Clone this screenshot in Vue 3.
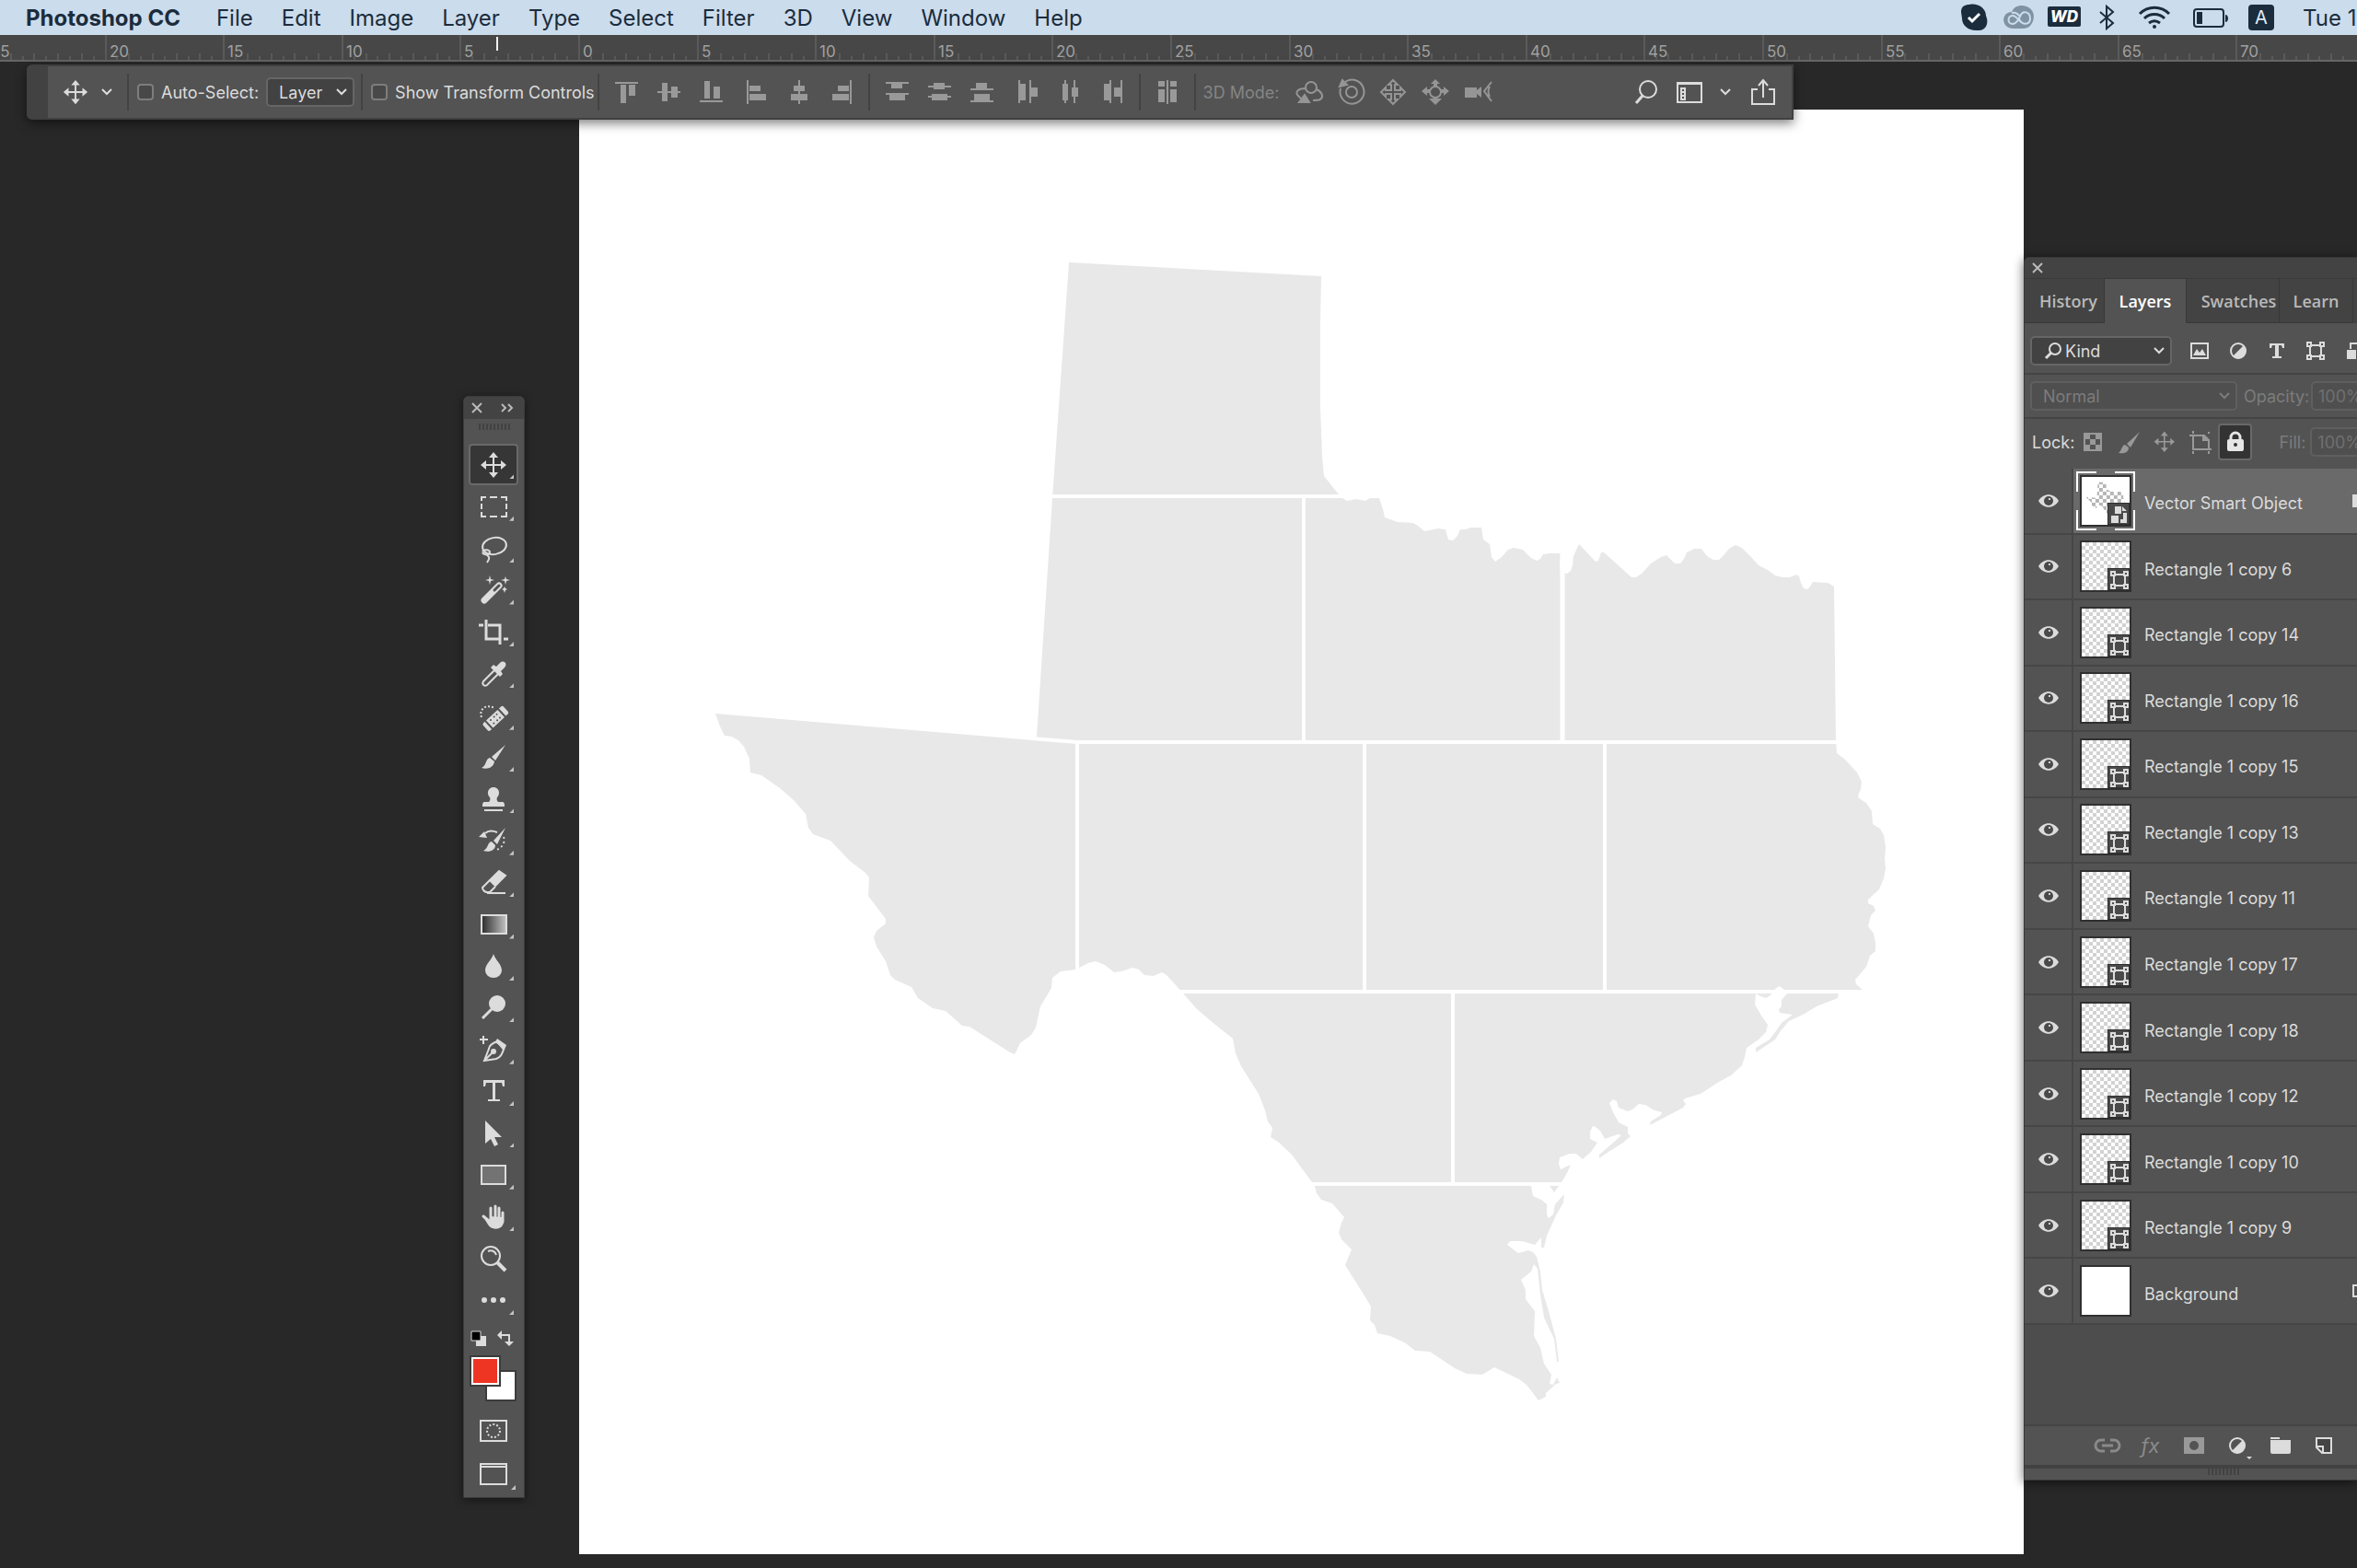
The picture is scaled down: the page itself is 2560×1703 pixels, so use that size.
<script setup>
import { ref, computed } from 'vue';

const menus = ['File', 'Edit', 'Image', 'Layer', 'Type', 'Select', 'Filter', '3D', 'View', 'Window', 'Help']

const autoSelect = ref(false)
const showTransform = ref(false)
const selectTarget = ref('Layer')
const filterKind = ref('Kind')
const blendMode = ref('Normal')
const opacity = ref('100%')
const fill = ref('100%')
const activeTool = ref('Move')
const activeTab = ref('Layers')
const tabs = ['History', 'Layers', 'Swatches', 'Learn']

// ruler: zero mark sits on the left edge of the artboard
const rulerMarks = computed(() => {
    const marks = []
    for (let i = -50; i < 150; i++) {
        const x = Math.round(629 + i * 12.86)
        const major = i % 10 === 0
        marks.push({ x: x, y: major ? 0 : (i % 2 === 0 ? 20 : 23), label: major ? Math.abs(i / 2) : null })
    }
    return marks
})

const alignGroups = [
    [
        ['Align top edges', '<path d="M2 3h25v2H2zM8 6h6v20H8zM17 6h7v12h-7z"/>'],
        ['Align vertical centers', '<path d="M2 13h25v2H2zM7 4h6v20H7zM17 8h7v12h-7z"/>'],
        ['Align bottom edges', '<path d="M2 23h25v2H2zM7 2h6v19H7zM17 8h7v13h-7z"/>'],
    ],
    [
        ['Align left edges', '<path d="M3 1h2v26H3zM6 7h12v6H6zM6 16h18v7H6z"/>'],
        ['Align horizontal centers', '<path d="M13 1h2v26h-2zM8 7h12v6H8zM5 16h18v7H5z"/>'],
        ['Align right edges', '<path d="M23 1h2v26h-2zM10 7h12v6H10zM4 16h18v7H4z"/>'],
    ],
    [
        ['Distribute top edges', '<path d="M2 3h25v2H2zM8 5h12v5H8zM2 15h25v2H2zM6 17h17v6H6z"/>'],
        ['Distribute vertical centers', '<path d="M2 7h25v2H2zM8 4h12v7H8zM2 18h25v2H2zM6 16h17v7H6z"/>'],
        ['Distribute bottom edges', '<path d="M2 10h25v2H2zM8 4h12v6H8zM2 23h25v2H2zM6 16h17v7H6z"/>'],
    ],
    [
        ['Distribute left edges', '<path d="M4 1h2v25H4zM6 5h6v18H6zM16 1h2v25h-2zM18 9h7v10h-7z"/>'],
        ['Distribute horizontal centers', '<path d="M8 1h2v25H8zM6 5h6v18H6zM18 1h2v25h-2zM16 9h7v10h-7z"/>'],
        ['Distribute right edges', '<path d="M11 1h2v25h-2zM5 5h6v18H5zM23 1h2v25h-2zM16 9h7v10h-7z"/>'],
    ],
]

const modes3d = [
    ['Orbit', '<circle cx="18" cy="9" r="6"/><path d="M12 10c-8 0-12 4-8 8l5 5M24 11c6 3 8 8 4 11-2 1-5 1-8 1"/><path d="M5 25l6-8 5 8z" fill="currentColor"/>'],
    ['Roll', '<circle cx="16" cy="14" r="6"/><path d="M4 10a13 13 0 1 0 5-7"/><path d="M3 8l3-7 5 5z" fill="currentColor"/>'],
    ['Pan', '<path d="M15 1l5 5h-3v6h6V9l5 5-5 5v-3h-6v6h3l-5 5-5-5h3v-6H7v3l-5-5 5-5v3h6V6h-3z"/>'],
    ['Slide', '<circle cx="15" cy="14" r="6"/><g fill="currentColor" stroke="none"><path d="M15 0l5 5h-3v3h-4V5h-3zM15 28l7-7h-5v-2h-4v2H8zM0 13l6-5v3h3v4H6v3zM30 13l-6-5v3h-3v4h3v3z"/></g>'],
    ['Zoom camera', '<path d="M1 9h13v3l5-4v12l-5-4v4H1z" fill="currentColor" stroke="none"/><path d="M30 3l-8 10 8 11M28 8c-2 3-2 8 0 11"/>'],
]

const icons = {
    move: '<path d="M16 5v22M5 16h22" stroke-width="2"/><path d="M16 2l5 6H11zM16 30l5-6H11zM2 16l6-5v10zM30 16l-6-5v10z" fill="currentColor" stroke="none"/>',
    chevron: '<path d="M2 3l5 5 5-5" stroke-width="2"/>',
    search: '<circle cx="12" cy="8" r="6" stroke-width="2"/><path d="M8 12l-6 6" stroke-width="3"/>',
    brush: '<g fill="currentColor" stroke="none"><path d="M29 3L14 16l4 4z"/><path d="M12 17c-5 1-3 8-9 11 6 2 13 0 14-7z"/></g>',
    half: '<circle cx="10" cy="10" r="8" stroke-width="2"/><path d="M16 4A8 8 0 0 1 4 16z" fill="currentColor" stroke="none"/>',
    shape: '<path d="M4 4h12v12H4z" stroke-width="2"/><g fill="#535353" stroke-width="2"><path d="M1 1h4v4H1zM15 1h4v4h-4zM1 15h4v4H1zM15 15h4v4h-4z"/></g>',
    type: '<path d="M2 2h16v5h-2l-1-3h-3v12h3v2H5v-2h3V4H5L4 7H2z" fill="currentColor" stroke="none"/>',
}

const tools = [
    ['Move', icons.move],
    ['Rectangular Marquee', '<path d="M3 10V6h5M12 6h8M24 6h6v4M30 13v6M30 22v5h-6M20 27h-8M8 27H3v-5M3 19v-6" stroke-width="2"/>'],
    ['Lasso', '<ellipse cx="17" cy="14" rx="13" ry="9" stroke-width="2" transform="rotate(-10 17 14)"/><path d="M4 20c2-3 8-2 8 1s-7 3-8 0c2 2 6 3 7 5s-1 4-2 6" stroke-width="2"/>'],
    ['Magic Wand', '<path d="M6 27L22 11" stroke-width="7" stroke-linecap="round"/><path d="M17 16l5-5" stroke="#535353" stroke-width="3" stroke-linecap="round"/><path d="M12 0l1 4 4 1-4 1-1 4-1-4-4-1 4-1zM29 1l1 3 4 1-4 1-1 4-1-4-4-1 4-1zM28 12l1 2 2 1-2 1-1 3-1-3-2-1 2-1z" fill="currentColor" stroke="none"/>'],
    ['Crop', '<path d="M0 9h5M8 3v21h14M10 9h13v21M27 24h5" stroke-width="3"/>'],
    ['Eyedropper', '<path d="M17 12L5 24c-2 3 1 6 4 4l12-12" stroke-width="2"/><path d="M13 9l3-3 3 2 4-4c4-4 9 1 5 5l-4 4 2 3-3 3z" fill="currentColor" stroke="none"/>'],
    ['Spot Healing Brush', '<g transform="rotate(-43 18 19)" fill="currentColor" stroke="none"><path d="M7 14h-2a2 2 0 0 0-2 2v7a2 2 0 0 0 2 2h2zM28 14h3a2 2 0 0 1 2 2v7a2 2 0 0 1-2 2h-3zM9 14h17v11H9z"/><g fill="#535353"><circle cx="13" cy="17" r="1"/><circle cx="18" cy="17" r="1"/><circle cx="22" cy="17" r="1"/><circle cx="13" cy="22" r="1"/><circle cx="18" cy="22" r="1"/><circle cx="22" cy="22" r="1"/></g></g><path d="M3 18c-3-8 4-15 14-10" stroke-width="2" stroke-dasharray="2 2"/>'],
    ['Brush', icons.brush],
    ['Clone Stamp', '<g fill="currentColor" stroke="none"><path d="M12 14c-4-4-2-11 4-11s8 7 4 11c-1 2 0 4 1 5h4c3 0 3 2 3 5H4c0-3 0-5 3-5h4c1-1 2-3 1-5zM6 27h20v2H6z"/></g>'],
    ['History Brush', '<g fill="currentColor" stroke="none"><path d="M29 2L16 16l4 4zM14 17c-5 1-3 7-9 10 6 2 13 0 13-6zM0 12l6-6 3 7z"/></g><path d="M7 8c3-3 8-3 13-1" stroke-width="2"/><path d="M27 12c2 5-1 12-8 14" stroke-width="2" stroke-dasharray="2 3"/>'],
    ['Eraser', '<path d="M12 14L22 4l7 5-11 11z" fill="currentColor"/><path d="M12 14l-8 8c0 3 3 5 5 5h3l6-6M9 28h20" stroke-width="2"/>'],
    ['Gradient', '<defs><linearGradient id="toolGradient"><stop offset="0" stop-color="#2b2b2b"/><stop offset="1" stop-color="#c4c4c4"/></linearGradient></defs><path d="M3 6h27v20H3z" fill="url(#toolGradient)" stroke-width="2"/>'],
    ['Blur', '<path d="M16 3c2 7 9 11 9 18a9 8 0 0 1-18 0c0-7 7-11 9-18z" fill="currentColor" stroke="none"/>'],
    ['Dodge', '<circle cx="20" cy="11" r="9" fill="currentColor" stroke="none"/><path d="M14 17L4 27" stroke-width="3"/>'],
    ['Pen', '<path d="M1 5h9M5 1v9" stroke-width="2"/><path d="M20 7c-5 2-9 5-9 8L6 28l13-2c5-2 6-5 8-10zM7 27l8-8" stroke-width="2"/><circle cx="16" cy="18" r="2" fill="currentColor"/><path d="M20 4l10 7-2 5-10-8z" fill="currentColor" stroke="none"/>'],
    ['Type', '<path d="M5 4h23v7h-2l-1-4h-7v18h5v2H10v-2h5V7H8l-1 4H5z" fill="currentColor" stroke="none"/>'],
    ['Path Selection', '<path d="M7 2v25l6-5 4 8 4-2-4-8h8z" fill="currentColor" stroke="none"/>'],
    ['Rectangle', '<path d="M3 6h26v20H3z" fill="#737373" stroke-width="2"/>'],
    ['Hand', '<path d="M5 15l6 5M13 6v12M18 4v14M22 6v12M26 11v10" stroke-width="3" stroke-linecap="round"/><path d="M5 16l5 8c3 6 15 7 17-2v-6l-15-1v5z" fill="currentColor" stroke="none"/>'],
    ['Zoom', '<circle cx="13" cy="13" r="10" stroke-width="2"/><path d="M10 8c4-2 8 0 9 4" stroke-width="2"/><path d="M20 20l9 9" stroke-width="4"/>'],
    ['Edit Toolbar', '<g fill="currentColor" stroke="none"><circle cx="6" cy="16" r="3"/><circle cx="16" cy="16" r="3"/><circle cx="26" cy="16" r="3"/></g>'],
]

const filters = [
    ['Filter for pixel layers', '<path d="M1 2h18v16H1z" stroke-width="2"/><path d="M3 15l4-7 3 4 3-4 4 7z" fill="currentColor" stroke="none"/>'],
    ['Filter for adjustment layers', icons.half],
    ['Filter for type layers', icons.type],
    ['Filter for shape layers', icons.shape],
    ['Filter for smart objects', '<path d="M6 8V2h8v16" stroke-width="2"/><path d="M2 9h10v10H2z" fill="currentColor" stroke="none"/>'],
]

const locks = [
    ['Lock transparent pixels', '<path d="M7 7h18v18H7z" stroke-width="2"/><path d="M7 7h6v6H7zM19 7h6v6h-6zM13 13h6v6h-6zM7 19h6v6H7zM19 19h6v6h-6z" fill="currentColor" stroke="none"/>', false],
    ['Lock image pixels', '<g fill="currentColor" stroke="none"><path d="M28 5L14 18l4 4z"/><path d="M12 19c-4 1-3 6-7 9 5 1 11 0 11-6z"/></g>', false],
    ['Lock position', '<g transform="translate(3 3) scale(.8)">' + icons.move + '</g>', false],
    ['Prevent auto-nesting', '<path d="M4 9h4M24 24h4M8 4v3M8 26v3M25 26v3M25 5v2" stroke-width="2"/><path d="M8 9h12l5 5v10H8z" stroke-width="2"/><path d="M18 8l8 7h-8z" fill="currentColor" stroke="none"/>', false],
    ['Lock all', '<path d="M11 14v-3a5 5 0 0 1 10 0v3" stroke-width="3"/><rect x="7" y="13" width="18" height="13" rx="2" fill="currentColor" stroke="none"/><circle cx="16" cy="19" r="2" fill="#333" stroke="none"/>', true],
]

const layers = ref([
    { name: 'Vector Smart Object', type: 'smart' },
    ...[6, 14, 16, 15, 13, 11, 17, 18, 12, 10, 9].map(n => ({ name: 'Rectangle 1 copy ' + n, type: 'shape' })),
    { name: 'Background', type: 'background' },
])
const activeLayer = ref('Vector Smart Object')

const footerActions = [
    ['Link layers', '<path d="M13 9H9a6 6 0 0 0 0 12h4M19 9h4a6 6 0 0 1 0 12h-4M10 15h12" stroke-width="3"/>', true],
    ['Layer style', '', true],
    ['Add mask', '<path d="M5 6h22v18H5zM16 10a5 5 0 1 0 0 10 5 5 0 0 0 0-10z" fill="#999" fill-rule="evenodd" stroke="none"/>', true],
    ['New adjustment layer', '<g transform="translate(6 5)">' + icons.half + '</g><path d="M26 27h6l-3 3z" fill="currentColor" stroke="none"/>', false],
    ['New group', '<path d="M5 6h10v2H5zM5 9h22v13a2 2 0 0 1-2 2H7a2 2 0 0 1-2-2z" fill="currentColor" stroke="none"/>', false],
    ['New layer', '<path d="M8 7h16v16H14l-6-6z" fill="#444" stroke-width="2"/><path d="M8 16h7v7" stroke-width="2"/>', false],
]

const texas = 'M1161 284L1435 299L1434 350L1434 440L1436 495L1438 516L1454 536L1458 540L1463 543L1473 541L1483 543L1488 540L1498 540L1502 552L1504 561L1518 566L1535 567L1540 570L1547 576L1562 573L1570 574L1573 585L1578 586L1583 581L1586 574L1592 574L1597 572L1609 572L1611 585L1618 590L1620 604L1624 609L1631 604L1638 596L1644 594L1654 596L1663 605L1669 608L1673 606L1676 601L1683 600L1695 600L1694 613L1695 621L1702 622L1706 619L1708 613L1709 603L1715 590L1733 609L1736 608L1739 599L1742 599L1761 616L1772 626L1777 626L1783 622L1793 611L1804 604L1810 602L1815 607L1819 611L1825 611L1829 606L1832 599L1840 595L1848 595L1854 603L1861 607L1867 607L1872 602L1879 594L1885 591L1892 594L1901 603L1910 613L1920 618L1928 624L1936 626L1944 626L1951 623L1954 625L1956 632L1959 638L1963 639L1966 636L1969 631L1985 632L1992 636L1994 803L1995 817L2004 824L2017 838L2022 848L2021 856L2018 863L2019 866L2027 871L2033 880L2034 894L2042 899L2046 906L2048 919L2047 932L2048 942L2046 953L2041 965L2029 976L2029 980L2035 983L2037 988L2032 993L2029 1005L2035 1013L2037 1023L2037 1032L2031 1037L2027 1049L2015 1063L2016 1068L2024 1075L1997 1077L1996 1083L1973 1092L1960 1100L1943 1108L1933 1120L1928 1128L1907 1142L1907 1137L1922 1128L1928 1120L1935 1110L1947 1101L1933 1099L1932 1095L1935 1092L1935 1085L1941 1078L1939 1075L1933 1070L1928 1073L1923 1080L1918 1083L1912 1081L1907 1078L1906 1090L1913 1102L1920 1112L1918 1120L1910 1128L1897 1137L1895 1147L1892 1156L1880 1167L1867 1174L1847 1187L1830 1192L1828 1194L1831 1198L1828 1202L1792 1221L1793 1217L1804 1210L1805 1207L1797 1205L1787 1199L1780 1198L1773 1204L1768 1206L1758 1202L1756 1195L1752 1193L1748 1197L1752 1207L1758 1218L1768 1223L1768 1230L1771 1233L1763 1240L1747 1250L1737 1257L1737 1253L1750 1242L1761 1232L1757 1231L1743 1236L1738 1227L1733 1223L1730 1222L1727 1228L1727 1236L1735 1240L1728 1250L1719 1258L1712 1252L1705 1252L1694 1256L1693 1263L1695 1269L1706 1264L1702 1273L1696 1283L1693 1287L1688 1294L1683 1287L1663 1287L1665 1298L1674 1302L1680 1307L1680 1318L1682 1322L1687 1318L1689 1307L1699 1296L1698 1305L1690 1319L1680 1341L1677 1354L1674 1354L1674 1343L1667 1351L1653 1347L1640 1347L1637 1351L1649 1360L1660 1357L1665 1359L1669 1364L1673 1380L1675 1400L1682 1423L1690 1453L1693 1478L1691 1478L1688 1453L1677 1430L1673 1405L1670 1377L1666 1372L1663 1380L1652 1389L1657 1400L1657 1410L1667 1423L1666 1450L1673 1463L1677 1480L1685 1492L1683 1502L1687 1503L1691 1495L1694 1501L1690 1502L1679 1512L1679 1516L1671 1520L1658 1503L1650 1497L1623 1484L1610 1492L1593 1491L1580 1485L1553 1467L1537 1466L1527 1458L1510 1450L1496 1447L1493 1438L1488 1433L1489 1418L1480 1403L1461 1373L1468 1356L1457 1345L1454 1338L1457 1327L1460 1321L1447 1306L1435 1302L1430 1295L1428 1287L1425 1283L1403 1253L1388 1239L1380 1234L1382 1224L1377 1217L1374 1205L1367 1187L1348 1157L1342 1143L1339 1127L1320 1112L1300 1095L1286 1079L1267 1058L1262 1055L1253 1059L1243 1058L1237 1052L1230 1050L1218 1054L1210 1055L1200 1047L1190 1043L1182 1045L1172 1050L1168 1052L1152 1054L1143 1061L1142 1072L1130 1092L1125 1115L1120 1123L1108 1132L1102 1144L1097 1142L1053 1114L1045 1113L1027 1097L1013 1094L997 1083L990 1071L972 1063L967 1058L962 1043L952 1027L949 1017L952 1010L962 1002L962 997L943 972L944 952L940 947L923 934L902 912L883 905L878 898L875 883L862 868L847 855L827 841L815 838L814 823L808 810L802 803L795 799L787 798L782 788L777 774L1122 803L1126 799L1143 540Z'
const regionLines = 'M1130 538H1470M1416 538V805M1120 801L1170 805H2002M1170 805V1060M1482 805V1076M1743 805V1076M1270 1076H2040M1578 1076V1285M1410 1285H1710'
</script>

<template>
    <div class="desktop">
        <header class="menubar">
            <nav class="menus">
                <a href="#" class="app-name">Photoshop CC</a>
                <a href="#" v-for="menu in menus" :key="menu">{{ menu }}</a>
            </nav>
            <div class="status">
                <svg width="49" height="38" viewBox="0 0 49 38"><path d="M11 13c0-6 4-8 9-8 9-2 18 4 18 12 4 9-1 17-9 16-9 1-17-5-17-13z" fill="#1b2c3d" /><path d="M19 19l4 4 8-8" fill="none" stroke="#fff" stroke-width="3" /></svg>
                <svg width="49" height="38" viewBox="0 0 49 38" fill="none" stroke="#cbdcec" stroke-width="2"><path d="M19 31c-14 0-14-18-2-18 3-7 10-8 16-6 8 3 9 10 7 16-2 5-5 8-11 8z" fill="#7f92a4" stroke="none" /><path d="M27 24c-4-3-5-7-9-7-6 0-6 9 0 9 3 0 6-4 8-8 3-8 11-5 11 2 0 7-8 8-12 1M17 14c4-1 7 1 9 4" /></svg>
                <svg width="50" height="38" viewBox="0 0 50 38"><rect x="7" y="7" width="36" height="22" rx="2" fill="#1b2c3d" /><text x="25" y="24" text-anchor="middle" class="wd">WD</text></svg>
                <svg width="42" height="38" viewBox="0 0 42 38" fill="none" stroke="#1b2c3d" stroke-width="2"><path d="M14 13l14 12-7 6V7l7 6-14 12" /></svg>
                <svg width="62" height="38" viewBox="0 0 62 38" fill="none" stroke="#1b2c3d" stroke-width="3"><path d="M15 15c9-9 23-9 32 0M20 20c6-6 16-6 22 0M25 25c4-3 8-3 12 0" /><circle cx="31" cy="29" r="2" fill="#1b2c3d" stroke="none" /></svg>
                <svg width="60" height="38" viewBox="0 0 60 38"><rect x="12" y="10" width="32" height="19" rx="3" fill="none" stroke="#1b2c3d" stroke-width="2" /><path d="M15 13h6v13h-6zM46 16c4 0 4 8 0 8z" fill="#1b2c3d" /></svg>
                <span class="input-source"><b>A</b></span>
                <time>Tue 1</time>
            </div>
        </header>

        <svg class="ruler" height="29">
            <g v-for="mark in rulerMarks" :key="mark.x">
                <line :x1="mark.x" :x2="mark.x" :y1="mark.y" y2="28" />
                <text v-if="mark.label !== null" :x="mark.x + 4" y="24">{{ mark.label }}</text>
            </g>
            <path class="cursor-mark" d="M540 2v15" />
            <path class="ruler-edge" d="M0 28h9999" />
        </svg>

        <main class="workspace">
            <svg class="artboard" viewBox="629 118 1569 1569">
                <path :d="texas" fill="#e8e8e8" />
                <path :d="regionLines" fill="none" stroke="#fff" stroke-width="4" />
                <path d="M1697 598V805" stroke="#fff" stroke-width="5" />
            </svg>

            <section class="options">
                <span class="handle"></span>
                <button class="current-tool" aria-label="Tool preset">
                    <svg width="30" height="30" viewBox="0 0 32 32" v-html="icons.move"></svg>
                    <svg width="14" height="12" viewBox="0 0 14 12" v-html="icons.chevron"></svg>
                </button>
                <i class="sep"></i>
                <label class="check"><input type="checkbox" v-model="autoSelect">Auto-Select:</label>
                <span class="select target">
                    <select v-model="selectTarget" aria-label="Auto-select target"><option>Layer</option><option>Group</option></select>
                    <svg width="14" height="12" viewBox="0 0 14 12" v-html="icons.chevron"></svg>
                </span>
                <i class="sep"></i>
                <label class="check"><input type="checkbox" v-model="showTransform">Show Transform Controls</label>
                <i class="sep"></i>
                <div class="align-pair">
                    <div v-for="(group, i) in alignGroups.slice(0, 2)" :key="i">
                        <button v-for="a in group" :key="a[0]" :aria-label="a[0]"><svg width="28" height="28" viewBox="0 0 28 28" v-html="a[1]"></svg></button>
                    </div>
                </div>
                <i class="sep"></i>
                <div class="align-pair">
                    <div v-for="(group, i) in alignGroups.slice(2)" :key="i">
                        <button v-for="a in group" :key="a[0]" :aria-label="a[0]"><svg width="28" height="28" viewBox="0 0 28 28" v-html="a[1]"></svg></button>
                    </div>
                </div>
                <i class="sep"></i>
                <div class="align-pair">
                    <button aria-label="Auto-align layers"><svg width="28" height="28" viewBox="0 0 28 28"><path d="M4 2h7v6H4zM4 11h7v14H4zM13 1h2v26h-2zM17 2h7v6h-7zM17 11h7v14h-7z" /></svg></button>
                </div>
                <i class="sep"></i>
                <span class="mode-label">3D Mode:</span>
                <div class="modes">
                    <button v-for="m in modes3d" :key="m[0]" :aria-label="m[0]"><svg width="32" height="28" viewBox="0 0 32 28" v-html="m[1]"></svg></button>
                </div>
                <div class="options-end">
                    <button aria-label="Search"><svg width="26" height="28" viewBox="0 0 26 28"><circle cx="15" cy="11" r="9" /><path d="M9 18l-7 8" stroke-width="3" /></svg></button>
                    <button aria-label="Workspace">
                        <svg width="28" height="26" viewBox="0 0 28 26"><path d="M1 3h26v21H1zM1 4h26M5 9h4v12H5zM5 13h4M5 17h4" /></svg>
                        <svg class="small" width="14" height="12" viewBox="0 0 14 12" v-html="icons.chevron"></svg>
                    </button>
                    <button aria-label="Share"><svg width="28" height="30" viewBox="0 0 28 30"><path d="M8 12H2v16h24V12h-6M14 21V3M9 8l5-6 5 6" /></svg></button>
                </div>
            </section>

            <aside class="tools">
                <div class="tools-head">
                    <button aria-label="Close tools"><svg width="12" height="12" viewBox="0 0 12 12"><path d="M1 1l10 10M11 1L1 11" /></svg></button>
                    <button aria-label="Expand tools"><svg width="14" height="10" viewBox="0 0 14 10"><path d="M1 1l4 4-4 4M8 1l4 4-4 4" /></svg></button>
                </div>
                <div class="grip"></div>
                <div class="tool-list">
                    <button v-for="t in tools" :key="t[0]" :aria-label="t[0]" :class="{ active: activeTool === t[0], more: t[0] !== 'Zoom' }" @click="activeTool = t[0]">
                        <svg width="32" height="32" viewBox="0 0 32 32" v-html="t[1]"></svg>
                    </button>
                </div>
                <div class="color-actions">
                    <button aria-label="Default colors"><svg width="18" height="18" viewBox="0 0 18 18"><path d="M6 6h11v11H6z" fill="#dcdcdc" stroke="none" /><path d="M1 1h10v10H1z" fill="#000" stroke-width="1" /></svg></button>
                    <button aria-label="Swap colors"><svg width="18" height="18" viewBox="0 0 18 18"><path d="M4 5h9v9" /><path d="M0 5l5-5v10zM8 12h10l-5 5z" fill="#dcdcdc" stroke="none" /></svg></button>
                </div>
                <div class="swatches">
                    <button class="back" aria-label="Background color"></button>
                    <button class="front" aria-label="Foreground color"></button>
                </div>
                <button class="mode" aria-label="Quick mask"><svg width="30" height="24" viewBox="0 0 30 24"><path d="M1 1h28v22H1z" /><circle cx="15" cy="12" r="7" stroke-dasharray="2 2" /></svg></button>
                <button class="mode more" aria-label="Screen mode"><svg width="30" height="24" viewBox="0 0 30 24"><path d="M1 1h28v22H1zM1 4h28" /></svg></button>
            </aside>

            <aside class="panel">
                <div class="panel-head">
                    <button aria-label="Close panel"><svg width="12" height="12" viewBox="0 0 12 12"><path d="M1 1l10 10M11 1L1 11" /></svg></button>
                </div>
                <div class="tabs">
                    <button v-for="tab in tabs" :key="tab" :class="{ active: activeTab === tab }" @click="activeTab = tab">{{ tab }}</button>
                </div>
                <div class="row filter-row">
                    <span class="select kind">
                        <svg class="lead" width="20" height="20" viewBox="0 0 20 20" v-html="icons.search"></svg>
                        <select v-model="filterKind" aria-label="Filter layers"><option>Kind</option><option>Name</option></select>
                        <svg width="14" height="12" viewBox="0 0 14 12" v-html="icons.chevron"></svg>
                    </span>
                    <button v-for="f in filters" :key="f[0]" :aria-label="f[0]"><svg width="20" height="20" viewBox="0 0 20 20" v-html="f[1]"></svg></button>
                </div>
                <div class="row blend-row">
                    <span class="select blend">
                        <select v-model="blendMode" aria-label="Blend mode" disabled><option>Normal</option></select>
                        <svg width="14" height="12" viewBox="0 0 14 12" v-html="icons.chevron"></svg>
                    </span>
                    <label for="opacity">Opacity:</label>
                    <input id="opacity" type="text" v-model="opacity" disabled>
                </div>
                <div class="row lock-row">
                    <span>Lock:</span>
                    <div class="locks">
                        <button v-for="l in locks" :key="l[0]" :aria-label="l[0]" :class="{ active: l[2] }"><svg width="32" height="32" viewBox="0 0 32 32" v-html="l[1]"></svg></button>
                    </div>
                    <label for="fill">Fill:</label>
                    <input id="fill" type="text" v-model="fill" disabled>
                </div>

                <ul class="layers">
                    <li v-for="layer in layers" :key="layer.name" :class="[layer.type, { active: activeLayer === layer.name }]">
                        <button class="eye" :aria-label="'Toggle ' + layer.name">
                            <svg width="22" height="14" viewBox="0 0 22 14"><path d="M0 7c5-9 17-9 22 0-5 9-17 9-22 0z" fill="#dcdcdc" stroke="none" /><circle cx="11" cy="7" r="5" fill="#4a4a4a" stroke="none" /><circle cx="12" cy="5" r="1" fill="#fff" stroke="none" /></svg>
                        </button>
                        <button class="layer" @click="activeLayer = layer.name">
                            <span class="thumb">
                                <svg v-if="layer.type === 'smart'" class="map" viewBox="629 118 1569 1569">
                                    <defs>
                                        <pattern id="checker" width="240" height="240" patternUnits="userSpaceOnUse">
                                            <path d="M0 0h120v120H0zM120 120h120v120H120z" />
                                        </pattern>
                                    </defs>
                                    <path :d="texas" fill="url(#checker)" />
                                </svg>
                                <svg v-if="layer.type === 'smart'" class="corners" width="64" height="64" viewBox="0 0 64 64"><path d="M1 22V1h21M42 1h21v21M63 42v21H42M22 63H1V42" /></svg>
                                <span v-if="layer.type !== 'background'" class="badge">
                                    <svg v-if="layer.type === 'shape'" width="20" height="20" viewBox="0 0 20 20" v-html="icons.shape"></svg>
                                    <svg v-else width="20" height="20" viewBox="0 0 20 20"><path d="M5 1h7v8H5zM13 1l5 5h-5zM1 11h8v8H1zM14 8h4v11h-7v-4h3z" fill="#dcdcdc" stroke="none" /></svg>
                                </span>
                            </span>
                            <span class="name">{{ layer.name }}</span>
                        </button>
                        <svg v-if="layer.type !== 'shape'" class="lock" width="16" height="14" viewBox="0 0 16 14"><path d="M1 1h14v12H1z" :fill="layer.type === 'smart' ? '#dcdcdc' : 'none'" /></svg>
                    </li>
                </ul>

                <div class="panel-empty"></div>
                <div class="panel-foot">
                    <button v-for="f in footerActions" :key="f[0]" :aria-label="f[0]" :class="{ off: f[2] }">
                        <em v-if="!f[1]">fx</em>
                        <svg v-else width="32" height="30" viewBox="0 0 32 30" v-html="f[1]"></svg>
                    </button>
                </div>
                <div class="panel-grip"><div class="grip"></div></div>
            </aside>
        </main>
    </div>
</template>

<style>
body {
    margin: 0;
    background-color: #282828;
}
</style>

<style scoped>
.desktop {
    display: flex;
    flex-direction: column;
    min-height: 100vh;
    overflow: hidden;
    font-family: Inter, "Liberation Sans", sans-serif;
    font-size: 18px;
    color: #dcdcdc;
}

button {
    display: flex;
    align-items: center;
    justify-content: center;
    flex: none;
    margin: 0;
    padding: 0;
    border: 0;
    background: none;
    color: inherit;
    font: inherit;
}

button svg, .select svg {
    fill: none;
    stroke: currentColor;
    stroke-width: 2;
    overflow: visible;
}

/* menu bar */
.menubar {
    display: flex;
    justify-content: space-between;
    height: 38px;
    background-color: #cbdcec;
    color: #1b2c3d;
    font-size: 24px;
    overflow: hidden;
}
.menus {
    display: flex;
    align-items: center;
    gap: 31px;
    padding-left: 28px;
}
.menus a {
    color: inherit;
    text-decoration: none;
    white-space: nowrap;
}
.menus .app-name {
    margin-right: 8px;
    font-weight: 700;
}
.status {
    display: flex;
    align-items: center;
    flex: none;
}
.wd {
    fill: #fff;
    font-size: 17px;
    font-weight: 800;
    font-style: italic;
}
.input-source {
    width: 50px;
    display: flex;
    justify-content: center;
}
.input-source b {
    width: 28px;
    line-height: 28px;
    border-radius: 4px;
    background-color: #1b2c3d;
    color: #dfeaf5;
    font-size: 20px;
    font-weight: 400;
    text-align: center;
}
.status time {
    width: 59px;
    padding-left: 20px;
    white-space: nowrap;
}

/* ruler */
.ruler {
    display: block;
    width: 100%;
    flex: none;
    background-color: #474747;
    fill: #a0a0a0;
    font-size: 17px;
}
.ruler line {
    stroke: #6e6e6e;
}
.cursor-mark {
    stroke: #f0f0f0;
    stroke-width: 2;
}
.ruler-edge {
    stroke: #666;
    stroke-width: 2;
}

.workspace {
    position: relative;
    flex: 1;
    background-color: #282828;
}
.artboard {
    display: block;
    margin: 52px 362px 15px 629px;
    background-color: #fff;
}

/* options bar, floating over the document */
.options {
    position: absolute;
    top: 3px;
    left: 29px;
    right: 612px;
    display: flex;
    align-items: center;
    height: 60px;
    box-sizing: border-box;
    border: 2px solid #404040;
    border-left: 0;
    border-radius: 6px 0 0 6px;
    background-color: #535353;
    box-shadow: 0 4px 12px rgba(0, 0, 0, 0.5);
    overflow: hidden;
    white-space: nowrap;
}
.handle {
    width: 23px;
    flex: none;
    align-self: stretch;
    background-color: #424242;
}
.current-tool {
    gap: 12px;
    margin: 0 15px 0 15px;
}
.sep {
    width: 2px;
    height: 40px;
    flex: none;
    background-color: #434343;
}
.check {
    display: flex;
    align-items: center;
    gap: 8px;
    margin: 0 3px 0 9px;
}
.check input {
    appearance: none;
    width: 18px;
    height: 18px;
    margin: 0;
    border: 2px solid #7d7d7d;
    border-radius: 4px;
    background-color: #484848;
}

.select {
    position: relative;
    display: flex;
    align-items: center;
    flex: none;
}
.select select {
    appearance: none;
    width: 100%;
    height: 32px;
    padding: 0 12px;
    border: 2px solid #666;
    border-radius: 5px;
    background-color: #424242;
    color: inherit;
    font: inherit;
    opacity: 1;
}
.select svg {
    position: absolute;
    right: 7px;
    pointer-events: none;
}
.select .lead {
    left: 15px;
    right: auto;
}
.target {
    width: 96px;
    margin: 0 7px 0 5px;
}

.align-pair {
    display: flex;
    gap: 4px;
    padding: 0 6px;
}
.align-pair div, .modes {
    display: flex;
}
.align-pair button, .modes button {
    width: 46px;
}
.align-pair svg {
    fill: #999;
    stroke: none;
}
.mode-label {
    width: 80px;
    margin: 0 12px 0 8px;
    color: #858585;
}
.modes {
    color: #959595;
}
.options-end {
    display: flex;
    align-items: center;
    gap: 20px;
    margin-left: auto;
    padding-right: 17px;
}
.options-end button {
    gap: 18px;
}

/* toolbox */
.tools {
    position: absolute;
    top: 363px;
    left: 503px;
    width: 67px;
    box-sizing: border-box;
    padding-bottom: 10px;
    border: 1px solid #3c3c3c;
    border-radius: 6px 6px 0 0;
    background-color: #535353;
    box-shadow: 0 2px 10px rgba(0, 0, 0, 0.5);
}
.tools-head {
    display: flex;
    align-items: center;
    justify-content: space-between;
    height: 24px;
    padding: 0 11px 0 8px;
    border-radius: 6px 6px 0 0;
    background-color: #434343;
    color: #b9b9b9;
}
.grip {
    width: 34px;
    height: 7px;
    margin: 5px auto 0;
    background-image: repeating-linear-gradient(90deg, #424242 0 2px, #535353 2px 4px);
}
.tool-list {
    display: grid;
    grid-auto-rows: 1fr;
    height: 953px;
    margin: 15px 6px 0 5px;
}
.tool-list button {
    box-sizing: border-box;
    border: 2px solid transparent;
    border-radius: 4px;
}
.tool-list .active {
    border-color: #696969;
    background-color: #363636;
}
.more {
    position: relative;
}
.more::after {
    content: "";
    position: absolute;
    right: 3px;
    bottom: 5px;
    width: 5px;
    height: 5px;
    background-color: #c4c4c4;
    clip-path: polygon(100% 0, 100% 100%, 0 100%);
}
.color-actions {
    display: flex;
    justify-content: space-between;
    padding: 10px 11px 0 7px;
}
.swatches {
    position: relative;
    height: 50px;
    margin: 9px 8px 0 6px;
}
.swatches button {
    position: absolute;
    width: 34px;
    height: 34px;
    border: 2px solid #3c3c3c;
}
.swatches .front {
    top: 0;
    left: 0;
    background-color: #ee3524;
    box-shadow: inset 0 0 0 2px #fff;
}
.swatches .back {
    right: 0;
    bottom: 0;
    background-color: #fff;
}
.mode {
    width: 54px;
    height: 30px;
    margin: 17px 6px 0 5px;
}
.mode.more::after {
    bottom: -2px;
}

/* layers panel */
.panel {
    position: absolute;
    top: 212px;
    right: 0;
    width: 362px;
    box-sizing: border-box;
    border: 1px solid #383838;
    border-right: 0;
    border-radius: 6px 0 0 0;
    background-color: #535353;
    box-shadow: 0 2px 12px rgba(0, 0, 0, 0.6);
    overflow: hidden;
    white-space: nowrap;
}
.panel-head {
    display: flex;
    align-items: center;
    height: 22px;
    padding-left: 8px;
    background-color: #434343;
    color: #b9b9b9;
}
.tabs {
    display: flex;
    height: 48px;
    background-color: #434343;
    border-top: 1px solid #3a3a3a;
    color: #b9b9b9;
    font-family: "Open Sans", sans-serif;
    font-weight: 600;
}
.tabs button {
    box-sizing: border-box;
    padding: 0 0 0 13px;
    border-right: 1px solid #383838;
    border-bottom: 1px solid #383838;
}
.tabs button:nth-child(1) {
    width: 87px;
    justify-content: flex-start;
    padding-left: 16px;
}
.tabs button:nth-child(2) {
    width: 89px;
    padding: 0;
}
.tabs button:nth-child(3) {
    width: 101px;
}
.tabs button:nth-child(4) {
    width: 80px;
    padding: 0;
}
.tabs .active {
    border-bottom-color: #535353;
    background-color: #535353;
    color: #fff;
}
.row {
    display: flex;
    align-items: center;
    box-sizing: border-box;
    padding-left: 6px;
}
.filter-row {
    height: 56px;
    border-bottom: 2px solid #444;
    padding-top: 6px;
}
.filter-row button {
    width: 42px;
}
.kind {
    width: 154px;
    margin-right: 9px;
}
.kind select {
    padding-left: 36px;
}
.blend-row {
    height: 48px;
    border-bottom: 2px solid #444;
    color: #7c7c7c;
}
.blend {
    width: 225px;
    margin-right: 7px;
}
.blend select {
    background-color: #4f4f4f;
    border-color: #5f5f5f;
}
.row label {
    width: 68px;
    margin-right: 5px;
    text-align: right;
    color: #7c7c7c;
    flex: none;
}
.row input {
    width: 70px;
    height: 32px;
    flex: none;
    box-sizing: border-box;
    padding: 0 6px;
    border: 2px solid #5f5f5f;
    border-radius: 5px;
    background-color: #4f4f4f;
    color: #6f6f6f;
    font: inherit;
}
.lock-row {
    height: 54px;
    padding: 0 0 4px 8px;
}
.lock-row span {
    width: 47px;
}
.lock-row label {
    width: 58px;
}
.locks {
    display: flex;
    width: 193px;
    color: #999;
}
.locks button {
    width: 39px;
}
.locks .active {
    width: 37px;
    height: 40px;
    box-sizing: border-box;
    border: 2px solid #696969;
    border-radius: 4px;
    background-color: #333;
    color: #e6e6e6;
}

.layers {
    display: grid;
    grid-auto-rows: 1fr;
    height: 930px;
    margin: 0;
    padding: 0;
    list-style: none;
}
.layers li {
    display: flex;
    align-items: stretch;
    border-bottom: 2px solid #464646;
}
.eye {
    width: 53px;
    box-sizing: border-box;
    border-right: 2px solid #464646;
}
.layer {
    flex: 1;
    justify-content: flex-start;
    gap: 14px;
    padding-left: 7px;
}
.active .layer, .layers .active {
    background-color: #6a6a6a;
}
.active .eye {
    background-color: #535353;
}
.thumb {
    position: relative;
    width: 52px;
    height: 52px;
    border: 2px solid #303030;
    background: repeating-conic-gradient(#d2d2d2 0 25%, #fff 0 50%) 0 0 / 8px 8px;
}
.smart .thumb, .background .thumb {
    background: #fff;
}
.map {
    display: block;
    width: 52px;
    height: 52px;
}
.thumb .map path {
    stroke: none;
}
.map pattern path {
    fill: #b5b5b5;
}
.corners {
    position: absolute;
    left: -6px;
    top: -6px;
    color: #fff;
}
.badge {
    position: absolute;
    right: 0;
    bottom: 0;
    display: flex;
    padding: 2px 0 0 2px;
    border: 1px solid #303030;
    background-color: #4a4a4a;
}
.name {
    padding-top: 6px;
}
.lock {
    align-self: center;
    flex: none;
    margin-right: -11px;
    stroke: #dcdcdc;
    stroke-width: 2;
}
.panel-empty {
    height: 108px;
    background-color: #4d4d4d;
    border-bottom: 2px solid #444;
}
.panel-foot {
    display: flex;
    height: 42px;
    padding-left: 66px;
    border-bottom: 4px solid #424242;
}
.panel-foot button {
    width: 47px;
}
.panel-foot .off {
    color: #8a8a8a;
}
.panel-foot em {
    font-size: 22px;
}
.panel-grip {
    height: 12px;
}
.panel-grip .grip {
    margin: 0 0 0 199px;
}
</style>
